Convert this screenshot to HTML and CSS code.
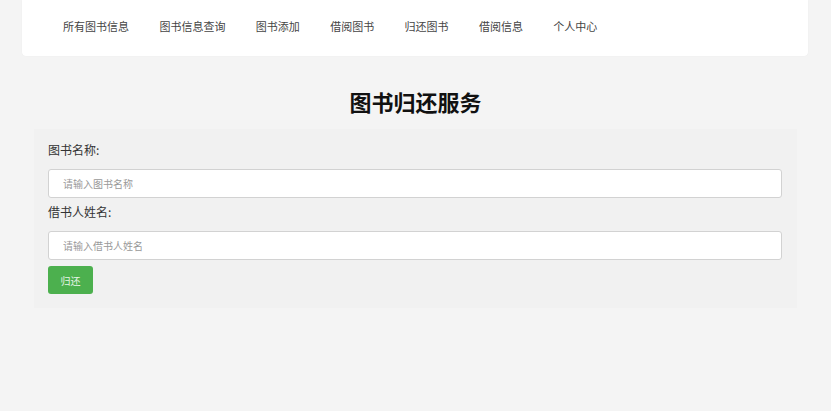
FILE: index.html
```html
<!DOCTYPE html>
<html lang="zh-CN">
<head>
<meta charset="utf-8">
<title>图书归还服务</title>
<link rel="stylesheet" href="styles.css">
</head>
<body>
<nav class="nav">
  <a class="nav-item">所有图书信息</a>
  <a class="nav-item">图书信息查询</a>
  <a class="nav-item">图书添加</a>
  <a class="nav-item">借阅图书</a>
  <a class="nav-item">归还图书</a>
  <a class="nav-item">借阅信息</a>
  <a class="nav-item">个人中心</a>
</nav>
<h2 class="title">图书归还服务</h2>
<form class="panel">
  <label class="label">图书名称:</label>
  <input class="input" type="text" placeholder="请输入图书名称">
  <label class="label label-2">借书人姓名:</label>
  <input class="input" type="text" placeholder="请输入借书人姓名">
  <button class="btn" type="button">归还</button>
</form>
</body>
</html>
```
FILE: styles.css
```css
* { box-sizing: border-box; }
body {
  margin: 0;
  background: #f4f4f4;
  font-family: "Noto Sans CJK SC", "Noto Sans", sans-serif;
  color: #333;
}
.nav {
  margin: 0 23px 0 22px;
  height: 56px;
  background: #fff;
  border-radius: 0 0 4px 4px;
  box-shadow: 0 0 1px rgba(0,0,0,0.08);
  display: flex;
  align-items: center;
  padding-left: 41px;
  gap: 30.4px;
}
.nav-item {
  font-size: 11px;
  color: #444;
  line-height: 14px;
  padding-bottom: 4px;
}
.title {
  margin: 30px 0 13px;
  text-align: center;
  font-size: 22px;
  line-height: 30px;
  font-weight: bold;
  color: #111;
}
.panel {
  margin: 0 34px;
  background: #f1f1f1;
  padding: 14px 15px 14px 14px;
  display: flex;
  flex-direction: column;
  align-items: flex-start;
}
.label {
  font-size: 12px;
  line-height: 14px;
  color: #333;
  margin-bottom: 12px;
}
.label-2 { margin-top: 7px; }
.input {
  width: 100%;
  height: 29px;
  border: 1.5px solid #d2d2d2;
  border-radius: 3px;
  background: #fff;
  padding: 0 14px;
  font-family: inherit;
  font-size: 10px;
  outline: none;
}
.input::placeholder { color: #999; }
.btn {
  margin-top: 6px;
  width: 45px;
  height: 28px;
  border: none;
  border-radius: 3px;
  background: #4cb04e;
  color: #e8f5e8;
  font-family: inherit;
  font-size: 10px;
  padding: 0;
}
```
